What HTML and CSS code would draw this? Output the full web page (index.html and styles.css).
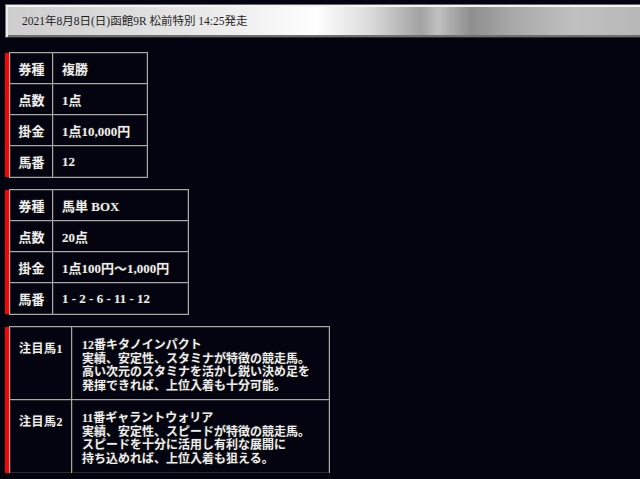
FILE: index.html
```html
<!DOCTYPE html>
<html lang="ja">
<head>
<meta charset="utf-8">
<title>買い目</title>
<link rel="stylesheet" href="styles.css">
</head>
<body>
<div class="header">2021年8月8日(日)函館9R 松前特別 14:25発走</div>

<div class="block">
  <table class="bet bet-1">
    <tr><th>券種</th><td>複勝</td></tr>
    <tr><th>点数</th><td>1点</td></tr>
    <tr><th>掛金</th><td>1点10,000円</td></tr>
    <tr><th>馬番</th><td>12</td></tr>
  </table>
</div>

<div class="block">
  <table class="bet bet-2">
    <tr><th>券種</th><td>馬単 BOX</td></tr>
    <tr><th>点数</th><td>20点</td></tr>
    <tr><th>掛金</th><td>1点100円～1,000円</td></tr>
    <tr><th>馬番</th><td>1 - 2 - 6 - 11 - 12</td></tr>
  </table>
</div>

<div class="block">
  <table class="bet notes">
    <tr><th>注目馬1</th><td>12番キタノインパクト<br>実績、安定性、スタミナが特徴の競走馬。<br>高い次元のスタミナを活かし鋭い決め足を<br>発揮できれば、上位入着も十分可能。</td></tr>
    <tr><th>注目馬2</th><td>11番ギャラントウォリア<br>実績、安定性、スピードが特徴の競走馬。<br>スピードを十分に活用し有利な展開に<br>持ち込めれば、上位入着も狙える。</td></tr>
  </table>
</div>
</body>
</html>
```

FILE: styles.css
```css
html, body {
  margin: 0;
  padding: 0;
  overflow: hidden;
}
body {
  background: #03040f;
  padding: 4px 0 0 5px;
  font-family: "Liberation Serif", "Noto Sans CJK JP", serif;
  font-weight: bold;
  color: #eeeeee;
}
.header {
  height: 34px;
  margin-right: -20px;
  box-sizing: border-box;
  border: 1px solid #2a2a2a;
  border-top-color: #6a6a6a;
  border-left-color: #7a7a7a;
  box-shadow: inset 0 2px 0 #f4f4f4, inset 2px 0 0 #eaeaea, inset 0 -2px 0 #707070;
  background: linear-gradient(90deg, #cdcdcd 0px, #dcdcdc 120px, #f2f2f2 250px, #ffffff 310px, #dadada 365px, #a2a2a2 415px, #c0c0c0 432px, #8e8e8e 465px, #a8a8a8 505px, #c0c0c0 570px, #b6b6b6 640px);
  color: #1e1e1e;
  font-size: 11.5px;
  font-weight: normal;
  line-height: 33px;
  padding-left: 16px;
  letter-spacing: 0;
}
.block {
  display: flex;
  margin-top: 15px;
  border-left: 4px solid #ff0000;
  align-self: flex-start;
  width: max-content;
}
.block + .block {
  margin-top: 13px;
}
.bet {
  margin-left: 1px;
  border-collapse: separate;
  border-spacing: 0;
}
.bet th, .bet td {
  border: 1px solid #2b2b2b;
  box-shadow: 0 0 0 1px #a8a8a8;
  text-shadow: 1px 1px 1px #000, 0 0 2px #555;
  padding: 0;
}
.bet-1 th, .bet-2 th {
  width: 41px;
  height: 29px;
  font-size: 13px;
  font-weight: bold;
  text-align: center;
}
.bet-1 td, .bet-2 td {
  height: 29px;
  font-size: 13px;
  padding-left: 8px;
  text-align: left;
}
.bet-1 td { width: 84px; }
.bet-2 td { width: 125px; }
.notes th {
  width: 52px;
  font-size: 12px;
  font-weight: bold;
  text-align: left;
  vertical-align: top;
  padding: 11px 0 0 8px;
  letter-spacing: 0.5px;
}
.notes td {
  width: 238px;
  font-size: 12px;
  line-height: 13.7px;
  padding: 11px 8px 5px 9px;
  text-align: left;
  white-space: nowrap;
}
```
